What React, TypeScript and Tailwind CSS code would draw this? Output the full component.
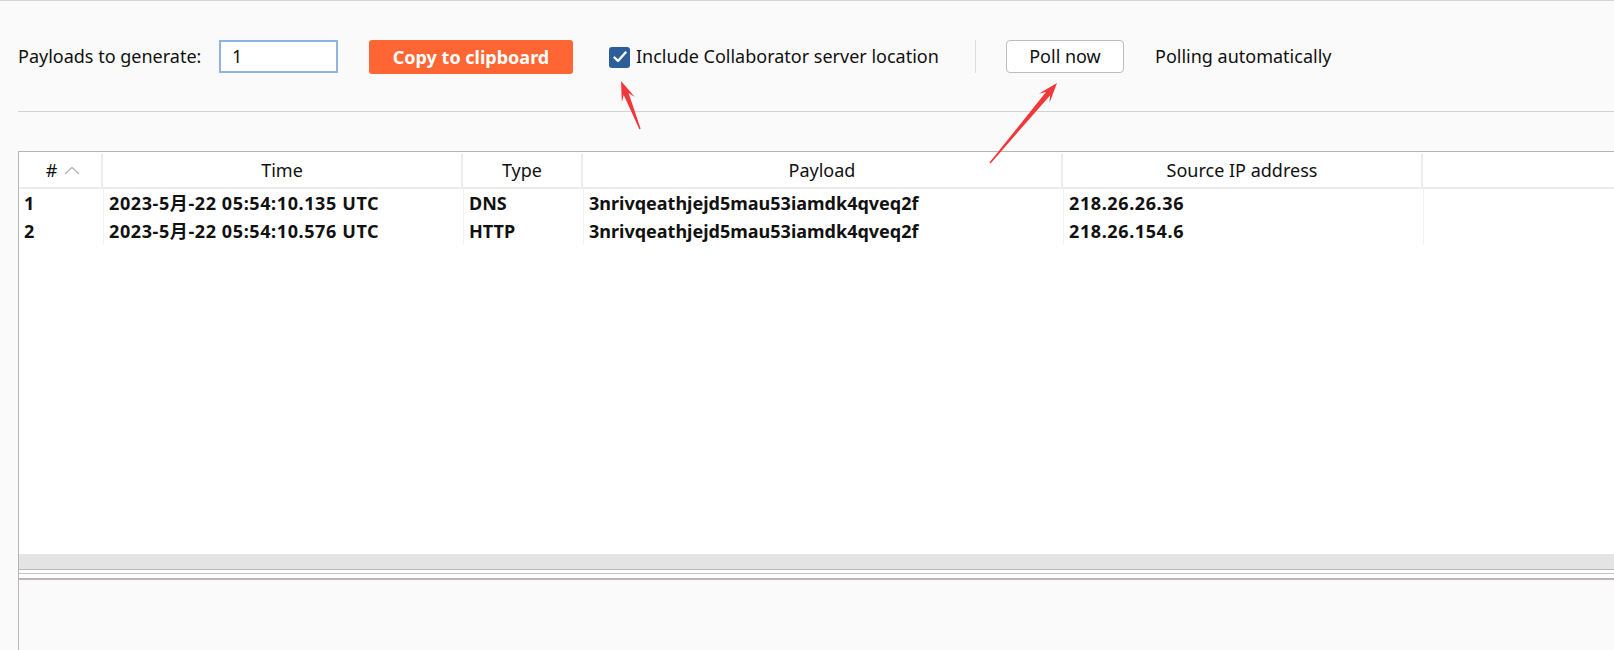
import React from 'react';

type Row = { id: number; time: string; type: string; payload: string; ip: string };

const rows: Row[] = [
  { id: 1, time: '2023-5月-22 05:54:10.135 UTC', type: 'DNS', payload: '3nrivqeathjejd5mau53iamdk4qveq2f', ip: '218.26.26.36' },
  { id: 2, time: '2023-5月-22 05:54:10.576 UTC', type: 'HTTP', payload: '3nrivqeathjejd5mau53iamdk4qveq2f', ip: '218.26.154.6' },
];

// column widths, left to right
const cols = ['w-[84px]', 'w-[360px]', 'w-[120px]', 'w-[480px]', 'w-[360px]'];

function Arrow({ tip, tail }: { tip: [number, number]; tail: [number, number] }) {
  const dx = tip[0] - tail[0];
  const dy = tip[1] - tail[1];
  const len = Math.hypot(dx, dy);
  const ux = dx / len;
  const uy = dy / len;
  const px = -uy;
  const py = ux;
  const headLen = 20;
  const base: [number, number] = [tip[0] - ux * headLen, tip[1] - uy * headLen];
  const neck: [number, number] = [tip[0] - ux * (headLen - 6), tip[1] - uy * (headLen - 6)];
  const pts: [number, number][] = [
    tip,
    [base[0] + px * 7, base[1] + py * 7],
    [neck[0] + px * 2.6, neck[1] + py * 2.6],
    [tail[0] + px * 0.7, tail[1] + py * 0.7],
    [tail[0] - px * 0.7, tail[1] - py * 0.7],
    [neck[0] - px * 2.6, neck[1] - py * 2.6],
    [base[0] - px * 7, base[1] - py * 7],
  ];
  return <polygon points={pts.map((p) => p.join(',')).join(' ')} fill="#f2373a" />;
}

export default function App() {
  return (
    <div className="relative flex h-[650px] w-full flex-col overflow-hidden border-t border-[#d6d6d6] bg-[#fafafa] font-['Noto_Sans','Noto_Sans_CJK_SC',sans-serif] text-[18px] text-[#111]">
      {/* toolbar */}
      <div className="flex h-[110px] shrink-0 items-start pl-[18px] pt-[38px]">
        <div className="flex h-[34px] w-[201px] items-center">Payloads to generate:</div>
        <div className="mt-px flex h-[33px] w-[119px] items-center border-2 border-[#8fb4e0] bg-white pl-[11px]">1</div>
        <button className="ml-[31px] mt-px flex h-[34px] w-[204px] items-center justify-center rounded-[3px] bg-[#ff6633] font-bold text-white">
          Copy to clipboard
        </button>
        <div className="ml-[36px] flex h-[34px] w-[332px] items-center">
          <span className="mt-[2px] flex h-[21px] w-[21px] items-center justify-center rounded-[3px] bg-[#2c5e98]">
            <svg width="14" height="12" viewBox="0 0 14 12" fill="none">
              <path d="M1.5 6.5 L5 10 L12.5 1.5" stroke="white" strokeWidth="2.4" strokeLinecap="round" strokeLinejoin="round" />
            </svg>
          </span>
          <span className="ml-[6px] whitespace-nowrap">Include Collaborator server location</span>
        </div>
        <div className="ml-[34px] mt-px h-[33px] w-px bg-[#dcdcdc]" />
        <button className="ml-[30px] mt-px flex h-[33px] w-[118px] items-center justify-center rounded-[4px] border border-[#bdbdbd] bg-white">
          Poll now
        </button>
        <div className="ml-[31px] flex h-[34px] items-center">Polling automatically</div>
      </div>

      <div className="ml-[18px] h-px shrink-0 bg-[#d3d3d3]" />
      <div className="h-[39px] shrink-0" />

      {/* interactions table */}
      <div className="ml-[18px] flex h-[419px] shrink-0 flex-col border-l border-t border-[#b8b4b5] bg-white">
        <div className="flex h-[37px] shrink-0 border-b-2 border-[#ebebeb] pt-[2px]">
          <div className={`${cols[0]} flex items-center justify-center border-r-2 border-[#ececec] pl-[6px]`}>
            <span>#</span>
            <svg className="ml-[7px]" width="16" height="9" viewBox="0 0 16 9" fill="none">
              <path d="M1 8 L8 1.5 L15 8" stroke="#b9b9b9" strokeWidth="1.4" />
            </svg>
          </div>
          <div className={`${cols[1]} flex items-center justify-center border-r-2 border-[#ececec]`}>Time</div>
          <div className={`${cols[2]} flex items-center justify-center border-r-2 border-[#ececec]`}>Type</div>
          <div className={`${cols[3]} flex items-center justify-center border-r-2 border-[#ececec]`}>Payload</div>
          <div className={`${cols[4]} flex items-center justify-center border-r-2 border-[#ececec]`}>Source IP address</div>
          <div className="flex-1" />
        </div>
        {rows.map((r) => (
          <div key={r.id} className="flex h-[28px] shrink-0 font-bold">
            <div className={`${cols[0]} flex items-center pl-[5px]`}>{r.id}</div>
            <div className={`${cols[1]} flex items-center border-l border-[#f2f2f2] pl-[5px] tracking-[0.6px]`}>{r.time}</div>
            <div className={`${cols[2]} flex items-center border-l border-[#f2f2f2] pl-[5px]`}>{r.type}</div>
            <div className={`${cols[3]} flex items-center border-l border-[#f2f2f2] pl-[5px]`}>{r.payload}</div>
            <div className={`${cols[4]} flex items-center border-l border-[#f2f2f2] pl-[5px] tracking-[0.6px]`}>{r.ip}</div>
            <div className="flex-1 border-l border-[#f2f2f2]" />
          </div>
        ))}
        <div className="flex-1" />
        <div className="h-[16px] shrink-0 border-b border-[#bdb7b9] bg-[#e4e4e4]" />
      </div>

      {/* split divider */}
      <div className="ml-[18px] flex h-[8px] shrink-0 flex-col border-l border-[#b8b4b5]">
        <div className="h-[3px] bg-white" />
        <div className="h-px bg-[#c9c4c6]" />
        <div className="flex-1 bg-white" />
      </div>

      {/* detail panel */}
      <div className="ml-[18px] flex-1 border-l border-t-2 border-[#bdb7b9] bg-[#fafafa]" />

      {/* annotation arrows */}
      <svg className="pointer-events-none absolute left-0 top-0" width="1614" height="650">
        <Arrow tip={[621, 80]} tail={[640, 128]} />
        <Arrow tip={[1057, 82]} tail={[990, 162]} />
      </svg>
    </div>
  );
}
